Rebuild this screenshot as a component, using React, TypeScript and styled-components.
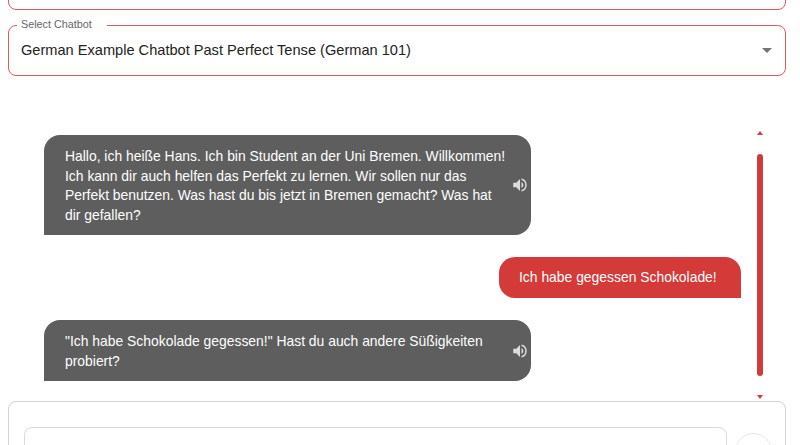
import React from "react";
import styled, { createGlobalStyle } from "styled-components";

const GlobalStyle = createGlobalStyle`
  html, body {
    margin: 0;
    padding: 0;
    background: #fff;
    overflow: hidden;
  }
`;

const Page = styled.div`
  width: 800px;
  height: 445px;
  overflow: hidden;
  padding: 0 14px 0 8px;
  box-sizing: border-box;
  font-family: "Liberation Sans", Arial, sans-serif;
`;

const TopField = styled.div`
  height: 50px;
  margin-top: -40px;
  box-sizing: border-box;
  border: 1px solid #dc5a5a;
  border-radius: 8px;
`;

const SelectBox = styled.fieldset`
  position: relative;
  margin: 15px 0 0;
  padding: 0 12px;
  height: 51px;
  box-sizing: border-box;
  border: 1px solid #dc5a5a;
  border-radius: 8px;
  display: flex;
  align-items: center;
  justify-content: space-between;
  min-width: 0;
`;

const Legend = styled.legend`
  position: absolute;
  top: -8px;
  left: 8px;
  padding: 0 4px;
  background: #fff;
  width: 90px;
  box-sizing: border-box;
  font-size: 10.8px;
  line-height: 12px;
  color: #666;
  white-space: nowrap;
`;

const SelectValue = styled.span`
  font-size: 14.6px;
  line-height: 20px;
  color: #222;
  margin-top: -1px;
`;

const Caret = styled.span`
  width: 0;
  height: 0;
  margin-right: 1px;
  border-left: 5px solid transparent;
  border-right: 5px solid transparent;
  border-top: 5px solid #757575;
`;

const ChatArea = styled.div`
  display: flex;
  margin-top: 52px;
  height: 274px;
`;

const MessageList = styled.div`
  width: 697px;
  margin-left: 36px;
  padding-top: 7px;
  display: flex;
  flex-direction: column;
  gap: 22px;
`;

const Bubble = styled.div<{ $user?: boolean }>`
  position: relative;
  box-sizing: border-box;
  font-size: 13.9px;
  line-height: 19.5px;
  color: #fff;
  background: ${(p) => (p.$user ? "#d33a38" : "#5e5e5e")};
  align-self: ${(p) => (p.$user ? "flex-end" : "flex-start")};
  width: ${(p) => (p.$user ? "242px" : "487px")};
  padding: ${(p) => (p.$user ? "11px 20px 10.5px 20px" : "12px 20px 10px 21px")};
  border-radius: ${(p) => (p.$user ? "16px 16px 0 16px" : "16px 16px 16px 0")};
`;

const BubbleText = styled.div`
  width: 445px;
`;

const Speaker = styled.svg`
  position: absolute;
  right: 2px;
  top: 50%;
  margin-top: -9px;
  width: 18px;
  height: 18px;
  fill: #dcdcdc;
`;

const ScrollTrack = styled.div`
  width: 6px;
  margin-left: 16px;
  padding-bottom: 3px;
  box-sizing: border-box;
  display: flex;
  flex-direction: column;
  align-items: center;
`;

const ScrollArrow = styled.span<{ $down?: boolean }>`
  width: 0;
  height: 0;
  margin-top: ${(p) => (p.$down ? "0" : "3px")};
  border-left: 3px solid transparent;
  border-right: 3px solid transparent;
  border-bottom: ${(p) => (p.$down ? "0" : "4px solid #d33a38")};
  border-top: ${(p) => (p.$down ? "4px solid #d33a38" : "0")};
`;

const ScrollThumb = styled.div`
  width: 6px;
  height: 222px;
  margin-top: 19px;
  margin-bottom: 19px;
  border-radius: 3px;
  background: #d33a38;
`;

const Composer = styled.div`
  margin-top: -1px;
  height: 80px;
  box-sizing: border-box;
  border: 1px solid #d2d2d2;
  border-radius: 8px;
  padding: 25px 13px 0 15px;
  display: flex;
  align-items: flex-start;
`;

const InputBox = styled.div`
  width: 703px;
  height: 60px;
  box-sizing: border-box;
  border: 1px solid #dcdad6;
  border-radius: 8px;
`;

const SendButton = styled.div`
  width: 37px;
  height: 37px;
  margin: 6px 0 0 8px;
  box-sizing: border-box;
  border: 1px solid #e6e6e6;
  border-radius: 50%;
`;

const SpeakerIcon = () => (
  <Speaker viewBox="0 0 24 24">
    <path d="M3 9v6h4l5 5V4L7 9H3zm13.5 3A4.5 4.5 0 0 0 14 7.97v8.05A4.5 4.5 0 0 0 16.5 12zM14 3.23v2.06a7 7 0 0 1 0 13.42v2.06a9 9 0 0 0 0-17.54z" />
  </Speaker>
);

export default function App() {
  return (
    <Page>
      <GlobalStyle />
      <TopField />
      <SelectBox>
        <Legend>Select Chatbot</Legend>
        <SelectValue>German Example Chatbot Past Perfect Tense (German 101)</SelectValue>
        <Caret />
      </SelectBox>
      <ChatArea>
        <MessageList>
          <Bubble>
            <BubbleText>
              Hallo, ich heiße Hans. Ich bin Student an der Uni Bremen. Willkommen! Ich kann dir
              auch helfen das Perfekt zu lernen. Wir sollen nur das Perfekt benutzen. Was hast du
              bis jetzt in Bremen gemacht? Was hat dir gefallen?
            </BubbleText>
            <SpeakerIcon />
          </Bubble>
          <Bubble $user>Ich habe gegessen Schokolade!</Bubble>
          <Bubble>
            <BubbleText>
              "Ich habe Schokolade gegessen!" Hast du auch andere Süßigkeiten probiert?
            </BubbleText>
            <SpeakerIcon />
          </Bubble>
        </MessageList>
        <ScrollTrack>
          <ScrollArrow />
          <ScrollThumb />
          <ScrollArrow $down />
        </ScrollTrack>
      </ChatArea>
      <Composer>
        <InputBox />
        <SendButton />
      </Composer>
    </Page>
  );
}
